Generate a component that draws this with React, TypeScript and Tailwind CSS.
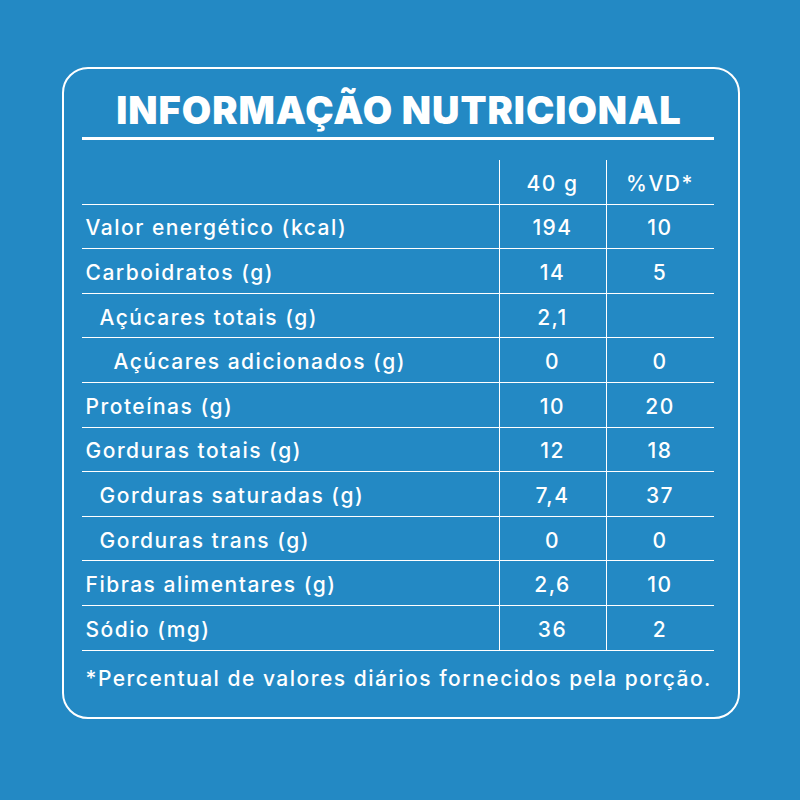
import React from "react";

type Row = { label: string; indent: 0 | 1 | 2; a: string; b: string };

const rows: Row[] = [
  { label: "Valor energético (kcal)", indent: 0, a: "194", b: "10" },
  { label: "Carboidratos (g)", indent: 0, a: "14", b: "5" },
  { label: "Açúcares totais (g)", indent: 1, a: "2,1", b: "" },
  { label: "Açúcares adicionados (g)", indent: 2, a: "0", b: "0" },
  { label: "Proteínas (g)", indent: 0, a: "10", b: "20" },
  { label: "Gorduras totais (g)", indent: 0, a: "12", b: "18" },
  { label: "Gorduras saturadas (g)", indent: 1, a: "7,4", b: "37" },
  { label: "Gorduras trans (g)", indent: 1, a: "0", b: "0" },
  { label: "Fibras alimentares (g)", indent: 0, a: "2,6", b: "10" },
  { label: "Sódio (mg)", indent: 0, a: "36", b: "2" },
];

const indentCls = ["pl-[4px]", "pl-[18px]", "pl-[32px]"];

export default function App() {
  return (
    <div
      className="w-[800px] h-[800px] bg-[#2389c4] flex items-start justify-center pt-[67px] text-white"
      style={{ fontFamily: "Inter, 'Open Sans', sans-serif" }}
    >
      <div className="ml-[2px] w-[678px] h-[652px] border-[2.5px] border-white rounded-[26px] flex flex-col pl-[17.5px] pr-[23.5px]">
        <div className="h-[62px] flex items-end justify-center pb-[2px] pl-[2px]">
          <h1 className="text-[38px] leading-none font-black tracking-[1px]">
            INFORMAÇÃO NUTRICIONAL
          </h1>
        </div>
        <div className="mt-[6px] h-[3px] bg-white w-[632px]" />
        <div className="mt-[20px] grid grid-cols-[417px_107px_108px] text-[21px] leading-none font-medium tracking-[1.5px]">
          <div className="h-[44.6px] border-b-[1.5px] border-white" />
          <div className="h-[44.6px] border-b-[1.5px] border-l-[1.5px] border-white flex items-center justify-center pt-[4px]">
            40 g
          </div>
          <div className="h-[44.6px] border-b-[1.5px] border-l-[1.5px] border-white flex items-center justify-center pt-[4px]">
            %VD*
          </div>
          {rows.map((r) => (
            <React.Fragment key={r.label}>
              <div
                className={`h-[44.6px] border-b-[1.5px] border-white flex items-center pt-[3px] ${indentCls[r.indent]}`}
              >
                {r.label}
              </div>
              <div className="h-[44.6px] border-b-[1.5px] border-l-[1.5px] border-white flex items-center justify-center pt-[3px]">
                {r.a}
              </div>
              <div className="h-[44.6px] border-b-[1.5px] border-l-[1.5px] border-white flex items-center justify-center pt-[3px]">
                {r.b}
              </div>
            </React.Fragment>
          ))}
        </div>
        <div className="pl-[4px] mt-[17.5px] text-[21px] leading-none font-medium tracking-[1.5px]">
          *Percentual de valores diários fornecidos pela porção.
        </div>
      </div>
    </div>
  );
}
